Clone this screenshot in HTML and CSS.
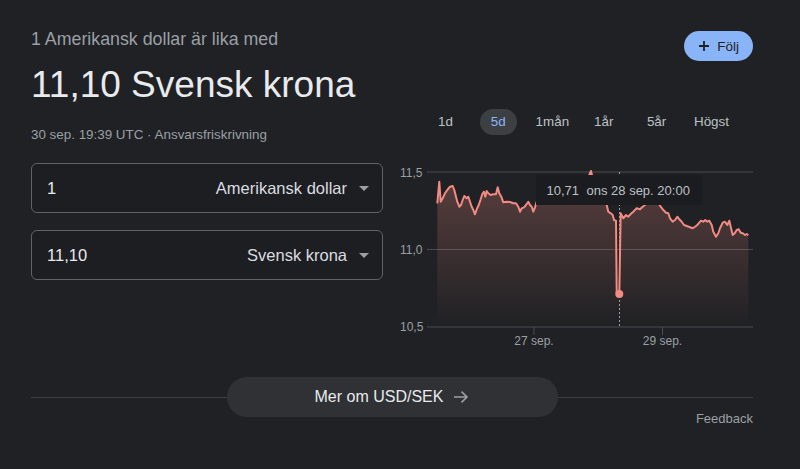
FILE: index.html
```html
<!DOCTYPE html>
<html lang="sv">
<head>
    <meta charset="UTF-8">
    <meta name="viewport" content="width=device-width, initial-scale=1.0">
    <title>USD till SEK</title>
    <link rel="stylesheet" href="styles.css">
</head>
<body>
    <div class="kort">
        <div class="huvud">
            <!-- Kurs och omvandlare -->
            <div class="vanster">
                <div class="kurs-fran">1 Amerikansk dollar är lika med</div>
                <div class="kurs-till">11,10 Svensk krona</div>
                <div class="kurs-info">30 sep. 19:39 UTC · Ansvarsfriskrivning</div>
                <div class="omvandlare">
                    <div class="falt">
                        <span class="belopp">1</span>
                        <span class="valuta">Amerikansk dollar</span>
                        <svg class="pil-ner" width="10" height="5" viewBox="0 0 10 5"><polygon points="0,0 10,0 5,5"/></svg>
                    </div>
                    <div class="falt">
                        <span class="belopp">11,10</span>
                        <span class="valuta">Svensk krona</span>
                        <svg class="pil-ner" width="10" height="5" viewBox="0 0 10 5"><polygon points="0,0 10,0 5,5"/></svg>
                    </div>
                </div>
            </div>
            <!-- Diagram -->
            <div class="hoger">
                <button class="folj">
                    <svg width="10" height="10" viewBox="0 0 10 10"><path d="M5 0v10M0 5h10"/></svg>
                    Följ
                </button>
                <div class="perioder">
                    <div class="period"><span>1d</span></div>
                    <div class="period aktiv"><span>5d</span></div>
                    <div class="period"><span>1mån</span></div>
                    <div class="period"><span>1år</span></div>
                    <div class="period"><span>5år</span></div>
                    <div class="period"><span>Högst</span></div>
                </div>
                <svg class="diagram" width="363" height="200" viewBox="390 150 363 200">
                    <defs>
                        <linearGradient id="fyllning" x1="0" y1="0" x2="0" y2="1">
                            <stop offset="0" stop-color="#f28b82" stop-opacity="0.28"/>
                            <stop offset="1" stop-color="#f28b82" stop-opacity="0"/>
                        </linearGradient>
                    </defs>
                    <line class="rutnat" x1="427" y1="172" x2="753" y2="172"/>
                    <line class="rutnat" x1="427" y1="249.5" x2="753" y2="249.5"/>
                    <line class="rutnat" x1="427" y1="327" x2="753" y2="327"/>
                    <line class="rutnat" x1="534" y1="327" x2="534" y2="335"/>
                    <line class="rutnat" x1="662.5" y1="327" x2="662.5" y2="335"/>
                    <text class="etikett" x="400" y="176.5">11,5</text>
                    <text class="etikett" x="400" y="253.5">11,0</text>
                    <text class="etikett" x="400" y="331">10,5</text>
                    <text class="etikett" x="534" y="345" text-anchor="middle">27 sep.</text>
                    <text class="etikett" x="662.5" y="345" text-anchor="middle">29 sep.</text>
                    <path class="yta" d="M437.3 203.3 L439.3 181.7 440.7 201.7 442.7 198.3 445 193.3 447.3 190 450 186.7 452.7 186 454.3 190 456 196.7 457.3 201.7 459.3 206.7 461 205 462.7 200 464.3 196 466.7 198.3 468.3 196.7 470 201.7 471.7 206.7 473.3 210 475 214.3 476.7 209.3 478.7 205 480.7 199.3 482.3 194 484 191.7 485.3 196.7 486.7 191 488.3 193.3 490.7 195 493.3 194.3 496 194.3 497.7 187.3 499.3 193.3 501.3 196.7 503.3 202.3 506.7 201.7 510 202 513.3 203.3 516 203.3 518.3 206.7 520 211.7 521.7 208.3 524 207.3 526 205 528.3 201.7 530 205 531.7 206.7 533.3 211.7 535 207.3 536.7 201.7 540 197 548 193 556 195 565 190 575 192 585 185 591 171 595 188 600 195 605 203 606.7 205 608.3 211.7 610.7 213.3 612.7 215 614 220 616 220.7 616.7 293 619.3 294 620.7 213.3 623.3 218.3 626 215 628.3 216.7 630.7 214 633.3 211.7 636.7 208.3 640 209.3 642.7 206.7 645 205 648 200 652 196 656 200 659 204 660.7 206.7 663.3 210 666 212.7 668.3 213.3 670 218.3 672.7 221.7 675 220 677.3 216.7 679.3 219.3 681.7 221.7 684 225 686.7 226 690 227.3 692.7 228.3 695 226.7 697.3 225 699.3 222.7 701 220.7 703.3 221.7 705.3 220 707.3 221.7 709.3 220.7 711.7 225 713.3 231.7 716 236.7 718.3 233.3 720 228.3 722.7 222.7 725 221.7 727.3 225 729.3 220.7 730.7 226.7 732.7 235 734.7 233.3 736.7 230 738.7 229.3 740.7 232.7 742.7 233.3 745 235 746.7 234 748.3 235.3 L748.3 327 L437.3 327 Z"/>
                    <line class="markering" x1="619.5" y1="172" x2="619.5" y2="327"/>
                    <path class="kurva" d="M437.3 203.3 L439.3 181.7 440.7 201.7 442.7 198.3 445 193.3 447.3 190 450 186.7 452.7 186 454.3 190 456 196.7 457.3 201.7 459.3 206.7 461 205 462.7 200 464.3 196 466.7 198.3 468.3 196.7 470 201.7 471.7 206.7 473.3 210 475 214.3 476.7 209.3 478.7 205 480.7 199.3 482.3 194 484 191.7 485.3 196.7 486.7 191 488.3 193.3 490.7 195 493.3 194.3 496 194.3 497.7 187.3 499.3 193.3 501.3 196.7 503.3 202.3 506.7 201.7 510 202 513.3 203.3 516 203.3 518.3 206.7 520 211.7 521.7 208.3 524 207.3 526 205 528.3 201.7 530 205 531.7 206.7 533.3 211.7 535 207.3 536.7 201.7 540 197 548 193 556 195 565 190 575 192 585 185 591 171 595 188 600 195 605 203 606.7 205 608.3 211.7 610.7 213.3 612.7 215 614 220 616 220.7 616.7 293 619.3 294 620.7 213.3 623.3 218.3 626 215 628.3 216.7 630.7 214 633.3 211.7 636.7 208.3 640 209.3 642.7 206.7 645 205 648 200 652 196 656 200 659 204 660.7 206.7 663.3 210 666 212.7 668.3 213.3 670 218.3 672.7 221.7 675 220 677.3 216.7 679.3 219.3 681.7 221.7 684 225 686.7 226 690 227.3 692.7 228.3 695 226.7 697.3 225 699.3 222.7 701 220.7 703.3 221.7 705.3 220 707.3 221.7 709.3 220.7 711.7 225 713.3 231.7 716 236.7 718.3 233.3 720 228.3 722.7 222.7 725 221.7 727.3 225 729.3 220.7 730.7 226.7 732.7 235 734.7 233.3 736.7 230 738.7 229.3 740.7 232.7 742.7 233.3 745 235 746.7 234 748.3 235.3"/>
                    <circle class="punkt" cx="619.3" cy="294" r="4"/>
                    <!-- Tooltip -->
                    <rect class="tips" x="536" y="175" width="166" height="30"/>
                    <text class="tips-text" x="546.5" y="195">10,71</text>
                    <text class="tips-text" x="586.5" y="195">ons 28 sep. 20:00</text>
                </svg>
            </div>
        </div>
        <div class="mer">
            <a href="#">
                Mer om USD/SEK
                <svg width="16" height="12" viewBox="0 0 16 12"><path d="M1 6h13M8.5 0.6L14 6l-5.5 5.4"/></svg>
            </a>
        </div>
        <div class="feedback">Feedback</div>
    </div>
</body>
</html>
```

FILE: styles.css
```css
/* Stil globalt */
body {
    margin: 0;
    background-color: #202124;
    color: #e8eaed;
    font-family: "Liberation Sans", Arial, sans-serif;
}
.kort {
    padding: 27px 47px 0 31px;
}
.huvud {
    display: flex;
    gap: 7px;
}
.vanster {
    width: 352px;
    flex: none;
}
.hoger {
    flex: 1;
    display: flex;
    flex-direction: column;
}
.kurs-fran {
    font-size: 17.8px;
    line-height: 24px;
    color: #9aa0a6;
}
.kurs-till {
    margin-top: 12px;
    font-size: 37px;
    line-height: 44px;
    color: #e8eaed;
}
.kurs-info {
    margin-top: 18px;
    font-size: 13.4px;
    line-height: 20px;
    color: #9aa0a6;
}
.omvandlare {
    margin-top: 18px;
    display: flex;
    flex-direction: column;
    gap: 17px;
}
.falt {
    display: flex;
    align-items: center;
    height: 50px;
    box-sizing: border-box;
    padding: 0 13px 0 15px;
    border: 1px solid #5f6368;
    border-radius: 6px;
    background-color: #1d1e21;
    font-size: 16.5px;
}
.belopp {
    flex: 1;
    color: #e8eaed;
}
.valuta {
    color: #dadce0;
}
.pil-ner {
    margin-left: 12px;
    fill: #9aa0a6;
}
.folj {
    align-self: flex-end;
    display: flex;
    align-items: center;
    gap: 8px;
    height: 30px;
    margin-top: 4px;
    padding: 0 14px 0 15px;
    border: none;
    border-radius: 15px;
    background-color: #8ab4f8;
    color: #202124;
    font-family: inherit;
    font-size: 13.5px;
}
.folj svg {
    stroke: #202124;
    stroke-width: 1.8;
}
.perioder {
    display: grid;
    grid-template-columns: repeat(6, 52.8px);
    margin: 48px 0 0 29px;
}
.period {
    text-align: center;
}
.period span {
    display: inline-block;
    height: 26px;
    line-height: 26px;
    padding: 0 11px;
    border-radius: 13px;
    font-size: 13.4px;
    color: #bdc1c6;
}
.period.aktiv span {
    background-color: #3c4043;
    color: #8ab4f8;
}
.diagram {
    display: block;
    margin-top: 15px;
}
.rutnat {
    stroke: #4a4c50;
    stroke-width: 1;
}
.etikett {
    font-size: 12px;
    fill: #9aa0a6;
}
.yta {
    fill: url(#fyllning);
}
.kurva {
    fill: none;
    stroke: #f28b82;
    stroke-width: 2;
    stroke-linejoin: round;
}
.markering {
    stroke: #9aa0a6;
    stroke-width: 1;
    stroke-dasharray: 2 2;
}
.punkt {
    fill: #f28b82;
}
.tips {
    fill: #1b1c1f;
}
.tips-text {
    font-size: 13px;
    fill: #bdc1c6;
}
.mer {
    display: flex;
    align-items: center;
    margin-top: 27px;
}
.mer::before, .mer::after {
    content: "";
    flex: 1;
    height: 1px;
    background-color: #3c4043;
}
.mer a {
    display: flex;
    align-items: center;
    justify-content: center;
    gap: 10px;
    width: 331px;
    height: 40px;
    border-radius: 20px;
    background-color: #303134;
    color: #e8eaed;
    font-size: 16px;
    text-decoration: none;
}
.mer svg {
    fill: none;
    stroke: #9aa0a6;
    stroke-width: 1.6;
}
.feedback {
    margin-top: -8px;
    text-align: right;
    font-size: 13px;
    line-height: 20px;
    color: #9aa0a6;
}
```
